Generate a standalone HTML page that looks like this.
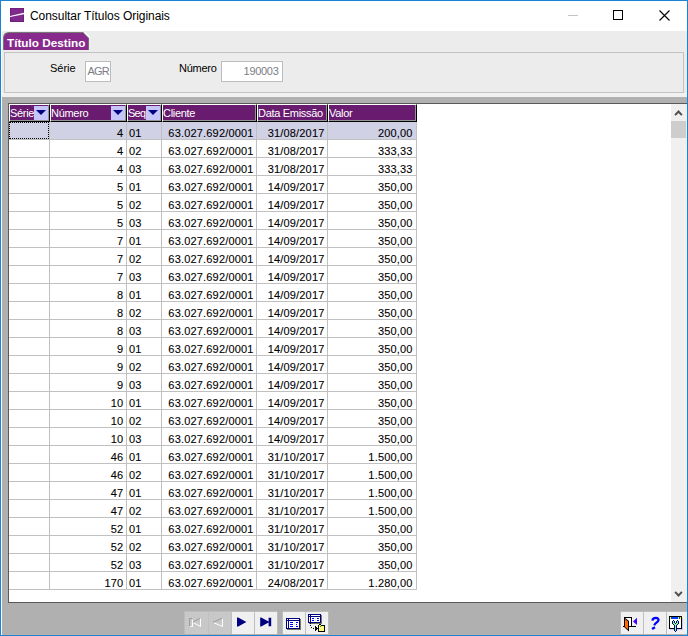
<!DOCTYPE html><html><head><meta charset="utf-8"><title>Consultar Títulos Originais</title><style>
*{box-sizing:border-box;margin:0;padding:0}
html,body{width:688px;height:636px;overflow:hidden;background:#ececec;font-family:"Liberation Sans",sans-serif;}
.a{position:absolute}
.t{position:absolute;white-space:nowrap;font-size:11px;line-height:14px;color:#000}
.hd{position:absolute;top:104px;height:18px;background:#691c6f;border-left:1px solid #fff;border-top:1px solid #fff;border-right:1px solid #000;border-bottom:1px solid #000}
.hd i{position:absolute;right:0;top:0;bottom:0;left:0;border-right:1px solid #969696;border-bottom:1px solid #969696}
.hd span{position:absolute;left:0px;top:1px;font-size:11px;line-height:14px;color:#fff;white-space:nowrap;letter-spacing:-0.3px}
.dd{position:absolute;top:1px;height:14px;right:1px;width:14px;background:#c5c5fa}
.dd:after{content:"";position:absolute;left:2px;top:4px;width:10px;height:5px;background:#000080;clip-path:polygon(0 0,100% 0,50% 100%)}
.row{position:absolute;left:9px;width:407px;height:18px;border-bottom:1px solid #c0c0c0}
.c{position:absolute;top:0;height:17px;font-size:11px;line-height:14px;padding-top:4px;white-space:nowrap;color:#000;letter-spacing:.18px;-webkit-text-stroke:.1px #000}
.vl{position:absolute;top:122px;width:1px;height:468px;background:#c0c0c0}
.btn{position:absolute;top:612px;height:22px;width:22px}
</style></head><body>
<div class="a" style="left:0;top:0;width:688px;height:636px;border:1px solid #1883d7"></div>
<div class="a" style="left:1px;top:1px;width:686px;height:30px;background:#fff"></div>
<svg class="a" style="left:10px;top:8px" width="14" height="14" viewBox="0 0 14 14"><rect width="14" height="14" fill="#6c177a"/><rect x=".6" y=".6" width="12.8" height="12.8" fill="#80298c"/><path d="M0 8.1 L14 4.8 L14 6.2 L0 8.9 Z" fill="#fff"/></svg>
<div class="t" style="left:30px;top:8px;font-size:12px;line-height:16px;letter-spacing:-.05px" id="title">Consultar Títulos Originais</div>
<div class="a" style="left:568px;top:15px;width:10px;height:1px;background:#c4c4c4"></div>
<div class="a" style="left:613px;top:10px;width:10px;height:10px;border:1px solid #000"></div>
<svg class="a" style="left:659px;top:10px" width="11" height="11" viewBox="0 0 11 11"><path d="M0.5 0.5 L10.5 10.5 M10.5 0.5 L0.5 10.5" stroke="#000" stroke-width="1.1" fill="none"/></svg>
<div class="a" style="left:1px;top:31px;width:1px;height:604px;background:#fff"></div>
<svg class="a" style="left:0;top:30px" width="96" height="22" viewBox="0 30 96 22"><path d="M3 50 V38 Q3 32 9 32 H83.5 L89 37.5 V50 Z" fill="#777"/><path d="M84 32 L90 38" stroke="#fff" stroke-width="1.2" fill="none"/><path d="M4 50 V38.5 Q4 33 9.5 33 H83 L88.2 38.2 V50 Z" fill="#872a8c"/></svg>
<div class="t" id="tab" style="left:7px;top:36px;font-weight:bold;color:#fff;font-size:11.75px">Título Destino</div>
<div class="a" style="left:4px;top:52px;width:680px;height:41px;background:#ececec;border:1px solid #c2c2c2"></div>
<div class="t" id="l1" style="left:50px;top:61px">Série</div>
<div class="a" style="left:85px;top:61px;width:26px;height:21px;background:#fff;border:1px solid #bdbdbd"></div>
<div class="t" id="v1" style="left:87.6px;top:64px;color:#7c7c86;letter-spacing:-.9px">AGR</div>
<div class="t" id="l2" style="left:179px;top:61px;letter-spacing:-.25px">Número</div>
<div class="a" style="left:221px;top:61px;width:62px;height:21px;background:#fff;border:1px solid #bdbdbd"></div>
<div class="t" id="v2" style="right:409.5px;top:64px;color:#7c7c86;letter-spacing:-.3px">190003</div>
<div class="a" style="left:2px;top:93px;width:685px;height:4px;background:#f1f1f1"></div>
<div class="a" style="left:2px;top:97px;width:685px;height:538px;background:#b0b0b0"></div>
<div class="a" style="left:8px;top:103px;width:679px;height:500px;background:#fff;border-left:1px solid #5a5a5a;border-top:1px solid #5a5a5a;border-bottom:1px solid #5a5a5a"></div>
<div class="hd" style="left:9px;width:41px"><i></i><span>Série</span><div class="dd"></div></div>
<div class="hd" style="left:50px;width:77px"><i></i><span>Número</span><div class="dd"></div></div>
<div class="hd" style="left:127px;width:35px"><i></i><span style="letter-spacing:-.75px">Seq</span><div class="dd"></div></div>
<div class="hd" style="left:162px;width:95px"><i></i><span>Cliente</span></div>
<div class="hd" style="left:257px;width:71px"><i></i><span>Data Emissão</span></div>
<div class="hd" style="left:328px;width:89px"><i></i><span>Valor</span></div>
<div class="row" style="top:122px;background:#d1d1e6;">
<div class="c" style="right:292.7px">4</div>
<div class="c" style="left:120px">01</div>
<div class="c" style="right:162.4px">63.027.692/0001</div>
<div class="c" style="right:91.5px">31/08/2017</div>
<div class="c" style="right:3.4px">200,00</div>
</div>
<div class="row" style="top:140px;">
<div class="c" style="right:292.7px">4</div>
<div class="c" style="left:120px">02</div>
<div class="c" style="right:162.4px">63.027.692/0001</div>
<div class="c" style="right:91.5px">31/08/2017</div>
<div class="c" style="right:3.4px">333,33</div>
</div>
<div class="row" style="top:158px;">
<div class="c" style="right:292.7px">4</div>
<div class="c" style="left:120px">03</div>
<div class="c" style="right:162.4px">63.027.692/0001</div>
<div class="c" style="right:91.5px">31/08/2017</div>
<div class="c" style="right:3.4px">333,33</div>
</div>
<div class="row" style="top:176px;">
<div class="c" style="right:292.7px">5</div>
<div class="c" style="left:120px">01</div>
<div class="c" style="right:162.4px">63.027.692/0001</div>
<div class="c" style="right:91.5px">14/09/2017</div>
<div class="c" style="right:3.4px">350,00</div>
</div>
<div class="row" style="top:194px;">
<div class="c" style="right:292.7px">5</div>
<div class="c" style="left:120px">02</div>
<div class="c" style="right:162.4px">63.027.692/0001</div>
<div class="c" style="right:91.5px">14/09/2017</div>
<div class="c" style="right:3.4px">350,00</div>
</div>
<div class="row" style="top:212px;">
<div class="c" style="right:292.7px">5</div>
<div class="c" style="left:120px">03</div>
<div class="c" style="right:162.4px">63.027.692/0001</div>
<div class="c" style="right:91.5px">14/09/2017</div>
<div class="c" style="right:3.4px">350,00</div>
</div>
<div class="row" style="top:230px;">
<div class="c" style="right:292.7px">7</div>
<div class="c" style="left:120px">01</div>
<div class="c" style="right:162.4px">63.027.692/0001</div>
<div class="c" style="right:91.5px">14/09/2017</div>
<div class="c" style="right:3.4px">350,00</div>
</div>
<div class="row" style="top:248px;">
<div class="c" style="right:292.7px">7</div>
<div class="c" style="left:120px">02</div>
<div class="c" style="right:162.4px">63.027.692/0001</div>
<div class="c" style="right:91.5px">14/09/2017</div>
<div class="c" style="right:3.4px">350,00</div>
</div>
<div class="row" style="top:266px;">
<div class="c" style="right:292.7px">7</div>
<div class="c" style="left:120px">03</div>
<div class="c" style="right:162.4px">63.027.692/0001</div>
<div class="c" style="right:91.5px">14/09/2017</div>
<div class="c" style="right:3.4px">350,00</div>
</div>
<div class="row" style="top:284px;">
<div class="c" style="right:292.7px">8</div>
<div class="c" style="left:120px">01</div>
<div class="c" style="right:162.4px">63.027.692/0001</div>
<div class="c" style="right:91.5px">14/09/2017</div>
<div class="c" style="right:3.4px">350,00</div>
</div>
<div class="row" style="top:302px;">
<div class="c" style="right:292.7px">8</div>
<div class="c" style="left:120px">02</div>
<div class="c" style="right:162.4px">63.027.692/0001</div>
<div class="c" style="right:91.5px">14/09/2017</div>
<div class="c" style="right:3.4px">350,00</div>
</div>
<div class="row" style="top:320px;">
<div class="c" style="right:292.7px">8</div>
<div class="c" style="left:120px">03</div>
<div class="c" style="right:162.4px">63.027.692/0001</div>
<div class="c" style="right:91.5px">14/09/2017</div>
<div class="c" style="right:3.4px">350,00</div>
</div>
<div class="row" style="top:338px;">
<div class="c" style="right:292.7px">9</div>
<div class="c" style="left:120px">01</div>
<div class="c" style="right:162.4px">63.027.692/0001</div>
<div class="c" style="right:91.5px">14/09/2017</div>
<div class="c" style="right:3.4px">350,00</div>
</div>
<div class="row" style="top:356px;">
<div class="c" style="right:292.7px">9</div>
<div class="c" style="left:120px">02</div>
<div class="c" style="right:162.4px">63.027.692/0001</div>
<div class="c" style="right:91.5px">14/09/2017</div>
<div class="c" style="right:3.4px">350,00</div>
</div>
<div class="row" style="top:374px;">
<div class="c" style="right:292.7px">9</div>
<div class="c" style="left:120px">03</div>
<div class="c" style="right:162.4px">63.027.692/0001</div>
<div class="c" style="right:91.5px">14/09/2017</div>
<div class="c" style="right:3.4px">350,00</div>
</div>
<div class="row" style="top:392px;">
<div class="c" style="right:292.7px">10</div>
<div class="c" style="left:120px">01</div>
<div class="c" style="right:162.4px">63.027.692/0001</div>
<div class="c" style="right:91.5px">14/09/2017</div>
<div class="c" style="right:3.4px">350,00</div>
</div>
<div class="row" style="top:410px;">
<div class="c" style="right:292.7px">10</div>
<div class="c" style="left:120px">02</div>
<div class="c" style="right:162.4px">63.027.692/0001</div>
<div class="c" style="right:91.5px">14/09/2017</div>
<div class="c" style="right:3.4px">350,00</div>
</div>
<div class="row" style="top:428px;">
<div class="c" style="right:292.7px">10</div>
<div class="c" style="left:120px">03</div>
<div class="c" style="right:162.4px">63.027.692/0001</div>
<div class="c" style="right:91.5px">14/09/2017</div>
<div class="c" style="right:3.4px">350,00</div>
</div>
<div class="row" style="top:446px;">
<div class="c" style="right:292.7px">46</div>
<div class="c" style="left:120px">01</div>
<div class="c" style="right:162.4px">63.027.692/0001</div>
<div class="c" style="right:91.5px">31/10/2017</div>
<div class="c" style="right:3.4px">1.500,00</div>
</div>
<div class="row" style="top:464px;">
<div class="c" style="right:292.7px">46</div>
<div class="c" style="left:120px">02</div>
<div class="c" style="right:162.4px">63.027.692/0001</div>
<div class="c" style="right:91.5px">31/10/2017</div>
<div class="c" style="right:3.4px">1.500,00</div>
</div>
<div class="row" style="top:482px;">
<div class="c" style="right:292.7px">47</div>
<div class="c" style="left:120px">01</div>
<div class="c" style="right:162.4px">63.027.692/0001</div>
<div class="c" style="right:91.5px">31/10/2017</div>
<div class="c" style="right:3.4px">1.500,00</div>
</div>
<div class="row" style="top:500px;">
<div class="c" style="right:292.7px">47</div>
<div class="c" style="left:120px">02</div>
<div class="c" style="right:162.4px">63.027.692/0001</div>
<div class="c" style="right:91.5px">31/10/2017</div>
<div class="c" style="right:3.4px">1.500,00</div>
</div>
<div class="row" style="top:518px;">
<div class="c" style="right:292.7px">52</div>
<div class="c" style="left:120px">01</div>
<div class="c" style="right:162.4px">63.027.692/0001</div>
<div class="c" style="right:91.5px">31/10/2017</div>
<div class="c" style="right:3.4px">350,00</div>
</div>
<div class="row" style="top:536px;">
<div class="c" style="right:292.7px">52</div>
<div class="c" style="left:120px">02</div>
<div class="c" style="right:162.4px">63.027.692/0001</div>
<div class="c" style="right:91.5px">31/10/2017</div>
<div class="c" style="right:3.4px">350,00</div>
</div>
<div class="row" style="top:554px;">
<div class="c" style="right:292.7px">52</div>
<div class="c" style="left:120px">03</div>
<div class="c" style="right:162.4px">63.027.692/0001</div>
<div class="c" style="right:91.5px">31/10/2017</div>
<div class="c" style="right:3.4px">350,00</div>
</div>
<div class="row" style="top:572px;">
<div class="c" style="right:292.7px">170</div>
<div class="c" style="left:120px">01</div>
<div class="c" style="right:162.4px">63.027.692/0001</div>
<div class="c" style="right:91.5px">24/08/2017</div>
<div class="c" style="right:3.4px">1.280,00</div>
</div>
<div class="vl" style="left:49px"></div>
<div class="vl" style="left:126px"></div>
<div class="vl" style="left:161px"></div>
<div class="vl" style="left:256px"></div>
<div class="vl" style="left:327px"></div>
<div class="vl" style="left:416px"></div>
<div class="a" style="left:9px;top:122px;width:40px;height:17px;border:1px dotted #000"></div>
<div class="a" style="left:671px;top:104px;width:16px;height:498px;background:#f0f0f0"></div>
<div class="a" style="left:671px;top:121px;width:15px;height:17px;background:#cdcdcd"></div>
<svg class="a" style="left:674px;top:109px" width="9" height="7" viewBox="0 0 9 7"><path d="M1.1 6.1 L4.5 2.5 L7.9 6.1" stroke="#505050" stroke-width="2" fill="none"/></svg>
<svg class="a" style="left:674px;top:591px" width="9" height="7" viewBox="0 0 9 7"><path d="M1.1 0.9 L4.5 4.5 L7.9 0.9" stroke="#505050" stroke-width="2" fill="none"/></svg>
<div class="a" style="left:184px;top:611px;width:94px;height:23px;background:#bcbcbc"></div>
<div class="a" style="left:282px;top:611px;width:47px;height:23px;background:#bcbcbc"></div>
<div class="a" style="left:620px;top:611px;width:67px;height:23px;background:#bcbcbc"></div>
<div class="btn" style="left:185px;width:23px;background:#c8c8c8"></div>
<div class="a" style="left:208px;top:612px;width:1px;height:22px;background:#c0c0c0"></div>
<div class="btn" style="left:209px;width:22px;background:#c8c8c8"></div>
<div class="a" style="left:231px;top:612px;width:1px;height:22px;background:#c0c0c0"></div>
<div class="btn" style="left:232px;width:22px;background:#f0f0f0"></div>
<div class="a" style="left:254px;top:612px;width:1px;height:22px;background:#c0c0c0"></div>
<div class="btn" style="left:255px;width:22px;background:#f0f0f0"></div>
<div class="btn" style="left:283px;width:22px;background:#f0f0f0"></div>
<div class="a" style="left:305px;top:612px;width:1px;height:22px;background:#c0c0c0"></div>
<div class="btn" style="left:306px;width:22px;background:#f0f0f0"></div>
<div class="btn" style="left:621px;width:22px;background:#f0f0f0"></div>
<div class="a" style="left:643px;top:612px;width:1px;height:22px;background:#c0c0c0"></div>
<div class="btn" style="left:644px;width:22px;background:#f0f0f0"></div>
<div class="a" style="left:666px;top:612px;width:1px;height:22px;background:#c0c0c0"></div>
<div class="btn" style="left:667px;width:20px;background:#f0f0f0"></div>
<div class="a" style="left:2px;top:634px;width:685px;height:1px;background:#b8b0ac"></div>
<svg class="a" style="left:185px;top:612px" width="46" height="22" viewBox="185 612 46 22" fill="none" stroke-width="1"><path d="M190.5 626.5 H192.5 V620 M193.5 622.8 L200.5 626.5 V618.5" stroke="#fff"/><path d="M189.5 626 V618.5 H192 M192.8 622 L200.3 618.3" stroke="#9a9a9a"/><path d="M214 622.8 L222.5 626.5 V618.5" stroke="#fff"/><path d="M213 622.2 L222.3 618.2" stroke="#9a9a9a"/></svg>
<svg class="a" style="left:232px;top:612px" width="46" height="22" viewBox="232 612 46 22"><path d="M237 617.6 H238.2 L246.4 622 L238.2 626.4 H237 Z" fill="#000080"/><path d="M260.2 617.6 H261.2 L268.6 621.6 V617.8 H271.2 V626.2 H268.6 V622.4 L261.2 626.4 H260.2 Z" fill="#000080"/></svg>
<svg class="a" style="left:286px;top:618px" width="15" height="12" viewBox="0 0 15 12" shape-rendering="crispEdges"><rect x="0" y="0" width="14" height="1" fill="#000080"/><rect x="0" y="1" width="1" height="1" fill="#000080"/><rect x="1" y="1" width="1" height="1" fill="#ffffff"/><rect x="2" y="1" width="1" height="1" fill="#000080"/><rect x="3" y="1" width="10" height="1" fill="#ffffff"/><rect x="13" y="1" width="1" height="1" fill="#000080"/><rect x="14" y="1" width="1" height="1" fill="#78785c"/><rect x="0" y="2" width="14" height="1" fill="#000080"/><rect x="14" y="2" width="1" height="1" fill="#78785c"/><rect x="0" y="3" width="1" height="1" fill="#000080"/><rect x="1" y="3" width="1" height="1" fill="#ffffff"/><rect x="2" y="3" width="1" height="1" fill="#000080"/><rect x="3" y="3" width="10" height="1" fill="#ffffff"/><rect x="13" y="3" width="1" height="1" fill="#000080"/><rect x="14" y="3" width="1" height="1" fill="#78785c"/><rect x="0" y="4" width="1" height="1" fill="#000080"/><rect x="1" y="4" width="1" height="1" fill="#ffffff"/><rect x="2" y="4" width="1" height="1" fill="#000080"/><rect x="3" y="4" width="1" height="1" fill="#ffffff"/><rect x="4" y="4" width="3" height="1" fill="#0000ff"/><rect x="7" y="4" width="1" height="1" fill="#ffffff"/><rect x="8" y="4" width="1" height="1" fill="#ececec"/><rect x="9" y="4" width="1" height="1" fill="#ffffff"/><rect x="10" y="4" width="2" height="1" fill="#0000ff"/><rect x="12" y="4" width="1" height="1" fill="#ffffff"/><rect x="13" y="4" width="1" height="1" fill="#000080"/><rect x="14" y="4" width="1" height="1" fill="#78785c"/><rect x="0" y="5" width="1" height="1" fill="#000080"/><rect x="1" y="5" width="1" height="1" fill="#ffffff"/><rect x="2" y="5" width="1" height="1" fill="#000080"/><rect x="3" y="5" width="5" height="1" fill="#ffffff"/><rect x="8" y="5" width="1" height="1" fill="#ececec"/><rect x="9" y="5" width="4" height="1" fill="#ffffff"/><rect x="13" y="5" width="1" height="1" fill="#000080"/><rect x="14" y="5" width="1" height="1" fill="#78785c"/><rect x="0" y="6" width="1" height="1" fill="#000080"/><rect x="1" y="6" width="1" height="1" fill="#ffffff"/><rect x="2" y="6" width="1" height="1" fill="#000080"/><rect x="3" y="6" width="1" height="1" fill="#ffffff"/><rect x="4" y="6" width="3" height="1" fill="#0000ff"/><rect x="7" y="6" width="1" height="1" fill="#ffffff"/><rect x="8" y="6" width="1" height="1" fill="#ececec"/><rect x="9" y="6" width="1" height="1" fill="#ffffff"/><rect x="10" y="6" width="1" height="1" fill="#0000ff"/><rect x="11" y="6" width="2" height="1" fill="#ffffff"/><rect x="13" y="6" width="1" height="1" fill="#000080"/><rect x="14" y="6" width="1" height="1" fill="#78785c"/><rect x="0" y="7" width="1" height="1" fill="#000080"/><rect x="1" y="7" width="1" height="1" fill="#ffffff"/><rect x="2" y="7" width="1" height="1" fill="#000080"/><rect x="3" y="7" width="5" height="1" fill="#ffffff"/><rect x="8" y="7" width="1" height="1" fill="#ececec"/><rect x="9" y="7" width="4" height="1" fill="#ffffff"/><rect x="13" y="7" width="1" height="1" fill="#000080"/><rect x="14" y="7" width="1" height="1" fill="#78785c"/><rect x="0" y="8" width="1" height="1" fill="#000080"/><rect x="1" y="8" width="1" height="1" fill="#ffffff"/><rect x="2" y="8" width="1" height="1" fill="#000080"/><rect x="3" y="8" width="1" height="1" fill="#ffffff"/><rect x="4" y="8" width="3" height="1" fill="#0000ff"/><rect x="7" y="8" width="1" height="1" fill="#ffffff"/><rect x="8" y="8" width="1" height="1" fill="#ececec"/><rect x="9" y="8" width="1" height="1" fill="#ffffff"/><rect x="10" y="8" width="2" height="1" fill="#0000ff"/><rect x="12" y="8" width="1" height="1" fill="#ffffff"/><rect x="13" y="8" width="1" height="1" fill="#000080"/><rect x="14" y="8" width="1" height="1" fill="#78785c"/><rect x="0" y="9" width="1" height="1" fill="#000080"/><rect x="1" y="9" width="1" height="1" fill="#ffffff"/><rect x="2" y="9" width="1" height="1" fill="#000080"/><rect x="3" y="9" width="10" height="1" fill="#ffffff"/><rect x="13" y="9" width="1" height="1" fill="#000080"/><rect x="14" y="9" width="1" height="1" fill="#78785c"/><rect x="0" y="10" width="14" height="1" fill="#000080"/><rect x="14" y="10" width="1" height="1" fill="#78785c"/><rect x="1" y="11" width="14" height="1" fill="#78785c"/></svg>
<svg class="a" style="left:308px;top:614px" width="17" height="18" viewBox="0 0 17 18" shape-rendering="crispEdges"><rect x="0" y="0" width="13" height="1" fill="#000080"/><rect x="0" y="1" width="1" height="1" fill="#000080"/><rect x="1" y="1" width="1" height="1" fill="#ffffff"/><rect x="2" y="1" width="1" height="1" fill="#000080"/><rect x="3" y="1" width="9" height="1" fill="#ffffff"/><rect x="12" y="1" width="1" height="1" fill="#000080"/><rect x="13" y="1" width="1" height="1" fill="#78785c"/><rect x="0" y="2" width="13" height="1" fill="#000080"/><rect x="13" y="2" width="1" height="1" fill="#78785c"/><rect x="0" y="3" width="1" height="1" fill="#000080"/><rect x="1" y="3" width="1" height="1" fill="#ffffff"/><rect x="2" y="3" width="1" height="1" fill="#000080"/><rect x="3" y="3" width="9" height="1" fill="#ffffff"/><rect x="12" y="3" width="1" height="1" fill="#000080"/><rect x="13" y="3" width="1" height="1" fill="#78785c"/><rect x="0" y="4" width="1" height="1" fill="#000080"/><rect x="1" y="4" width="1" height="1" fill="#ffffff"/><rect x="2" y="4" width="1" height="1" fill="#000080"/><rect x="3" y="4" width="1" height="1" fill="#ffffff"/><rect x="4" y="4" width="2" height="1" fill="#0000ff"/><rect x="6" y="4" width="1" height="1" fill="#ffffff"/><rect x="7" y="4" width="1" height="1" fill="#ececec"/><rect x="8" y="4" width="1" height="1" fill="#ffffff"/><rect x="9" y="4" width="2" height="1" fill="#0000ff"/><rect x="11" y="4" width="1" height="1" fill="#ffffff"/><rect x="12" y="4" width="1" height="1" fill="#000080"/><rect x="13" y="4" width="1" height="1" fill="#78785c"/><rect x="0" y="5" width="1" height="1" fill="#000080"/><rect x="1" y="5" width="1" height="1" fill="#ffffff"/><rect x="2" y="5" width="1" height="1" fill="#000080"/><rect x="3" y="5" width="4" height="1" fill="#ffffff"/><rect x="7" y="5" width="1" height="1" fill="#ececec"/><rect x="8" y="5" width="4" height="1" fill="#ffffff"/><rect x="12" y="5" width="1" height="1" fill="#000080"/><rect x="13" y="5" width="1" height="1" fill="#78785c"/><rect x="0" y="6" width="1" height="1" fill="#000080"/><rect x="1" y="6" width="1" height="1" fill="#ffffff"/><rect x="2" y="6" width="1" height="1" fill="#000080"/><rect x="3" y="6" width="1" height="1" fill="#ffffff"/><rect x="4" y="6" width="2" height="1" fill="#0000ff"/><rect x="6" y="6" width="1" height="1" fill="#ffffff"/><rect x="7" y="6" width="1" height="1" fill="#ececec"/><rect x="8" y="6" width="1" height="1" fill="#ffffff"/><rect x="9" y="6" width="2" height="1" fill="#0000ff"/><rect x="11" y="6" width="1" height="1" fill="#ffffff"/><rect x="12" y="6" width="1" height="1" fill="#000080"/><rect x="13" y="6" width="1" height="1" fill="#78785c"/><rect x="0" y="7" width="1" height="1" fill="#000080"/><rect x="1" y="7" width="1" height="1" fill="#ffffff"/><rect x="2" y="7" width="1" height="1" fill="#000080"/><rect x="3" y="7" width="9" height="1" fill="#ffffff"/><rect x="12" y="7" width="1" height="1" fill="#000080"/><rect x="13" y="7" width="1" height="1" fill="#78785c"/><rect x="0" y="8" width="13" height="1" fill="#000080"/><rect x="13" y="8" width="1" height="1" fill="#78785c"/><rect x="1" y="9" width="1" height="1" fill="#78785c"/><rect x="2" y="9" width="1" height="1" fill="#000000"/><rect x="3" y="9" width="11" height="1" fill="#78785c"/><rect x="11" y="10" width="2" height="1" fill="#000000"/><rect x="2" y="11" width="1" height="1" fill="#000000"/><rect x="10" y="11" width="1" height="1" fill="#000000"/><rect x="11" y="11" width="2" height="1" fill="#ffff00"/><rect x="13" y="11" width="4" height="1" fill="#000000"/><rect x="7" y="12" width="1" height="1" fill="#000000"/><rect x="10" y="12" width="1" height="1" fill="#000000"/><rect x="11" y="12" width="1" height="1" fill="#ffff00"/><rect x="12" y="12" width="1" height="1" fill="#0080c0"/><rect x="13" y="12" width="1" height="1" fill="#ffff00"/><rect x="14" y="12" width="1" height="1" fill="#ffffff"/><rect x="15" y="12" width="1" height="1" fill="#ffff00"/><rect x="16" y="12" width="1" height="1" fill="#000000"/><rect x="3" y="13" width="1" height="1" fill="#000000"/><rect x="7" y="13" width="2" height="1" fill="#000000"/><rect x="10" y="13" width="1" height="1" fill="#000000"/><rect x="11" y="13" width="1" height="1" fill="#ffffff"/><rect x="12" y="13" width="1" height="1" fill="#ffff00"/><rect x="13" y="13" width="1" height="1" fill="#ffffff"/><rect x="14" y="13" width="1" height="1" fill="#ffff00"/><rect x="15" y="13" width="1" height="1" fill="#ffffff"/><rect x="16" y="13" width="1" height="1" fill="#000000"/><rect x="5" y="14" width="1" height="1" fill="#000000"/><rect x="7" y="14" width="4" height="1" fill="#000000"/><rect x="11" y="14" width="1" height="1" fill="#ffff00"/><rect x="12" y="14" width="1" height="1" fill="#ffffff"/><rect x="13" y="14" width="1" height="1" fill="#ffff00"/><rect x="14" y="14" width="1" height="1" fill="#ffffff"/><rect x="15" y="14" width="1" height="1" fill="#ffff00"/><rect x="16" y="14" width="1" height="1" fill="#000000"/><rect x="7" y="15" width="2" height="1" fill="#000000"/><rect x="10" y="15" width="1" height="1" fill="#000000"/><rect x="11" y="15" width="1" height="1" fill="#ffffff"/><rect x="12" y="15" width="1" height="1" fill="#ffff00"/><rect x="13" y="15" width="1" height="1" fill="#ffffff"/><rect x="14" y="15" width="1" height="1" fill="#ffff00"/><rect x="15" y="15" width="1" height="1" fill="#ffffff"/><rect x="16" y="15" width="1" height="1" fill="#000000"/><rect x="7" y="16" width="1" height="1" fill="#000000"/><rect x="10" y="16" width="1" height="1" fill="#000000"/><rect x="11" y="16" width="1" height="1" fill="#ffff00"/><rect x="12" y="16" width="1" height="1" fill="#ffffff"/><rect x="13" y="16" width="1" height="1" fill="#ffff00"/><rect x="14" y="16" width="1" height="1" fill="#ffffff"/><rect x="15" y="16" width="1" height="1" fill="#ffff00"/><rect x="16" y="16" width="1" height="1" fill="#000000"/><rect x="10" y="17" width="7" height="1" fill="#000000"/></svg>
<svg class="a" style="left:621px;top:612px" width="22" height="22" viewBox="621 612 22 22"><rect x="624" y="617" width="8" height="10" fill="#000"/><rect x="625" y="618" width="6" height="8" fill="#fff"/><rect x="623" y="626" width="13" height="1" fill="#000"/><path d="M624.5 617.5 L629 621 V631.5 L624.5 627.5 Z" fill="#000"/><path d="M625 619 L628 621.6 V629.6 L625 627 Z" fill="#ff6a00"/><path d="M633 621.4 L637 617.8 V625 Z" fill="#4000ff"/></svg>
<svg class="a" style="left:644px;top:612px" width="22" height="22" viewBox="644 612 22 22" fill="none" stroke="#0000ff"><path d="M652.4 620.6 C652.6 618.6 654.2 617.9 655.9 617.9 C657.9 617.9 658.9 619 658.4 620.6 C657.9 622.2 655.2 622.8 654.2 625.4" stroke-width="2.2"/><path d="M652 629 L655 627.3" stroke-width="2.2"/></svg>
<svg class="a" style="left:669px;top:616px" width="14" height="16" viewBox="0 0 14 16" shape-rendering="crispEdges"><rect x="0" y="0" width="13" height="1" fill="#000000"/><rect x="0" y="1" width="1" height="1" fill="#000000"/><rect x="1" y="1" width="1" height="1" fill="#ffff00"/><rect x="2" y="1" width="7" height="1" fill="#0040ff"/><rect x="9" y="1" width="1" height="1" fill="#ffff00"/><rect x="10" y="1" width="1" height="1" fill="#0040ff"/><rect x="11" y="1" width="1" height="1" fill="#ffff00"/><rect x="12" y="1" width="1" height="1" fill="#000000"/><rect x="0" y="2" width="1" height="1" fill="#000000"/><rect x="1" y="2" width="1" height="1" fill="#ffff00"/><rect x="2" y="2" width="7" height="1" fill="#0040ff"/><rect x="9" y="2" width="1" height="1" fill="#ffff00"/><rect x="10" y="2" width="1" height="1" fill="#0040ff"/><rect x="11" y="2" width="1" height="1" fill="#ffff00"/><rect x="12" y="2" width="1" height="1" fill="#000000"/><rect x="13" y="2" width="1" height="1" fill="#c4c4ff"/><rect x="0" y="3" width="1" height="1" fill="#000000"/><rect x="1" y="3" width="11" height="1" fill="#ffffff"/><rect x="12" y="3" width="1" height="1" fill="#000000"/><rect x="13" y="3" width="1" height="1" fill="#c4c4ff"/><rect x="0" y="4" width="1" height="1" fill="#000000"/><rect x="1" y="4" width="3" height="1" fill="#ffffff"/><rect x="4" y="4" width="1" height="1" fill="#000080"/><rect x="5" y="4" width="3" height="1" fill="#ffffff"/><rect x="8" y="4" width="1" height="1" fill="#000080"/><rect x="9" y="4" width="3" height="1" fill="#ffffff"/><rect x="12" y="4" width="1" height="1" fill="#000000"/><rect x="13" y="4" width="1" height="1" fill="#c4c4ff"/><rect x="0" y="5" width="1" height="1" fill="#000000"/><rect x="1" y="5" width="2" height="1" fill="#ffffff"/><rect x="3" y="5" width="1" height="1" fill="#000080"/><rect x="4" y="5" width="1" height="1" fill="#80ff80"/><rect x="5" y="5" width="1" height="1" fill="#000080"/><rect x="6" y="5" width="1" height="1" fill="#ffffff"/><rect x="7" y="5" width="1" height="1" fill="#000080"/><rect x="8" y="5" width="1" height="1" fill="#80ff80"/><rect x="9" y="5" width="1" height="1" fill="#000080"/><rect x="10" y="5" width="2" height="1" fill="#ffffff"/><rect x="12" y="5" width="1" height="1" fill="#000000"/><rect x="13" y="5" width="1" height="1" fill="#c4c4ff"/><rect x="0" y="6" width="1" height="1" fill="#000000"/><rect x="1" y="6" width="2" height="1" fill="#ffffff"/><rect x="3" y="6" width="1" height="1" fill="#000080"/><rect x="4" y="6" width="1" height="1" fill="#80ff80"/><rect x="5" y="6" width="1" height="1" fill="#000080"/><rect x="6" y="6" width="1" height="1" fill="#ffffff"/><rect x="7" y="6" width="1" height="1" fill="#000080"/><rect x="8" y="6" width="1" height="1" fill="#80ff80"/><rect x="9" y="6" width="1" height="1" fill="#000080"/><rect x="10" y="6" width="2" height="1" fill="#ffffff"/><rect x="12" y="6" width="1" height="1" fill="#000000"/><rect x="13" y="6" width="1" height="1" fill="#c4c4ff"/><rect x="0" y="7" width="1" height="1" fill="#000000"/><rect x="1" y="7" width="2" height="1" fill="#ffffff"/><rect x="3" y="7" width="1" height="1" fill="#000080"/><rect x="4" y="7" width="2" height="1" fill="#80ff80"/><rect x="6" y="7" width="1" height="1" fill="#000080"/><rect x="7" y="7" width="2" height="1" fill="#80ff80"/><rect x="9" y="7" width="1" height="1" fill="#000080"/><rect x="10" y="7" width="2" height="1" fill="#ffffff"/><rect x="12" y="7" width="1" height="1" fill="#000000"/><rect x="13" y="7" width="1" height="1" fill="#c4c4ff"/><rect x="0" y="8" width="1" height="1" fill="#000000"/><rect x="1" y="8" width="3" height="1" fill="#ffffff"/><rect x="4" y="8" width="1" height="1" fill="#000080"/><rect x="5" y="8" width="3" height="1" fill="#80ff80"/><rect x="8" y="8" width="1" height="1" fill="#000080"/><rect x="9" y="8" width="3" height="1" fill="#ffffff"/><rect x="12" y="8" width="1" height="1" fill="#000000"/><rect x="13" y="8" width="1" height="1" fill="#c4c4ff"/><rect x="0" y="9" width="1" height="1" fill="#000000"/><rect x="1" y="9" width="4" height="1" fill="#ffffff"/><rect x="5" y="9" width="1" height="1" fill="#000080"/><rect x="6" y="9" width="1" height="1" fill="#80ff80"/><rect x="7" y="9" width="1" height="1" fill="#000080"/><rect x="8" y="9" width="4" height="1" fill="#ffffff"/><rect x="12" y="9" width="1" height="1" fill="#000000"/><rect x="13" y="9" width="1" height="1" fill="#c4c4ff"/><rect x="0" y="10" width="1" height="1" fill="#000000"/><rect x="1" y="10" width="4" height="1" fill="#ffffff"/><rect x="5" y="10" width="1" height="1" fill="#000080"/><rect x="6" y="10" width="1" height="1" fill="#80ff80"/><rect x="7" y="10" width="1" height="1" fill="#000080"/><rect x="8" y="10" width="4" height="1" fill="#ffffff"/><rect x="12" y="10" width="1" height="1" fill="#000000"/><rect x="13" y="10" width="1" height="1" fill="#c4c4ff"/><rect x="0" y="11" width="1" height="1" fill="#000000"/><rect x="1" y="11" width="4" height="1" fill="#ffffff"/><rect x="5" y="11" width="1" height="1" fill="#000080"/><rect x="6" y="11" width="1" height="1" fill="#80ff80"/><rect x="7" y="11" width="1" height="1" fill="#000080"/><rect x="8" y="11" width="4" height="1" fill="#ffffff"/><rect x="12" y="11" width="1" height="1" fill="#000000"/><rect x="13" y="11" width="1" height="1" fill="#c4c4ff"/><rect x="0" y="12" width="5" height="1" fill="#000000"/><rect x="5" y="12" width="1" height="1" fill="#000080"/><rect x="6" y="12" width="1" height="1" fill="#80ff80"/><rect x="7" y="12" width="1" height="1" fill="#000080"/><rect x="8" y="12" width="5" height="1" fill="#000000"/><rect x="13" y="12" width="1" height="1" fill="#c4c4ff"/><rect x="1" y="13" width="4" height="1" fill="#c4c4ff"/><rect x="5" y="13" width="1" height="1" fill="#000080"/><rect x="6" y="13" width="1" height="1" fill="#80ff80"/><rect x="7" y="13" width="1" height="1" fill="#000080"/><rect x="8" y="13" width="6" height="1" fill="#c4c4ff"/><rect x="5" y="14" width="1" height="1" fill="#000080"/><rect x="6" y="14" width="1" height="1" fill="#80ff80"/><rect x="7" y="14" width="1" height="1" fill="#000080"/><rect x="6" y="15" width="1" height="1" fill="#000080"/></svg>
</body></html>
